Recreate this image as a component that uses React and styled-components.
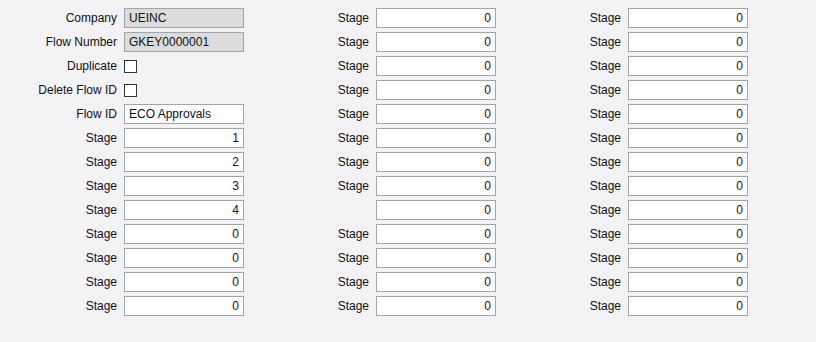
import React from "react";
import styled, { createGlobalStyle } from "styled-components";

const Global = createGlobalStyle`
  html, body { margin: 0; padding: 0; background: #f3f3f5; }
  body { font-family: "Liberation Sans", Arial, sans-serif; font-size: 12px; color: #111118; }
`;

const Page = styled.div`
  display: grid;
  grid-template-columns: repeat(3, 252px);
  padding-top: 8px;
  min-height: 342px;
  box-sizing: border-box;
  background: #f3f3f5;
`;

const Column = styled.div`
  display: flex;
  flex-direction: column;
  gap: 4px;
`;

const Row = styled.div`
  display: grid;
  grid-template-columns: 117px 120px;
  column-gap: 7px;
  height: 20px;
  align-items: center;
`;

const Label = styled.label`
  text-align: right;
  white-space: nowrap;
  font-size: 12px;
  line-height: 20px;
`;

const Box = styled.div`
  box-sizing: border-box;
  height: 20px;
  border: 1px solid #a4a4a4;
  background: ${(p) => (p.$disabled ? "#dbdcdd" : "#ffffff")};
  padding: 0 4px;
  text-align: ${(p) => (p.$num ? "right" : "left")};
  line-height: 18px;
  font-size: 12px;
  white-space: nowrap;
  overflow: hidden;
`;

const Check = styled.span`
  display: block;
  box-sizing: border-box;
  width: 13px;
  height: 13px;
  border: 1px solid #333;
  background: #fff;
`;

const col1 = [
  { label: "Company", value: "UEINC", disabled: true },
  { label: "Flow Number", value: "GKEY0000001", disabled: true },
  { label: "Duplicate", check: true },
  { label: "Delete Flow ID", check: true },
  { label: "Flow ID", value: "ECO Approvals" },
  ...[1, 2, 3, 4, 0, 0, 0, 0].map((n) => ({ label: "Stage", value: String(n), num: true })),
];

const col2 = Array.from({ length: 13 }, (_, i) => ({
  label: i === 8 ? "" : "Stage",
  value: "0",
  num: true,
}));

const col3 = Array.from({ length: 13 }, () => ({ label: "Stage", value: "0", num: true }));

function Field({ f }) {
  return (
    <Row>
      <Label>{f.label}</Label>
      {f.check ? (
        <Check />
      ) : (
        <Box $disabled={f.disabled} $num={f.num}>
          {f.value}
        </Box>
      )}
    </Row>
  );
}

export default function App() {
  return (
    <>
      <Global />
      <Page>
        {[col1, col2, col3].map((col, ci) => (
          <Column key={ci}>
            {col.map((f, i) => (
              <Field key={i} f={f} />
            ))}
          </Column>
        ))}
      </Page>
    </>
  );
}
